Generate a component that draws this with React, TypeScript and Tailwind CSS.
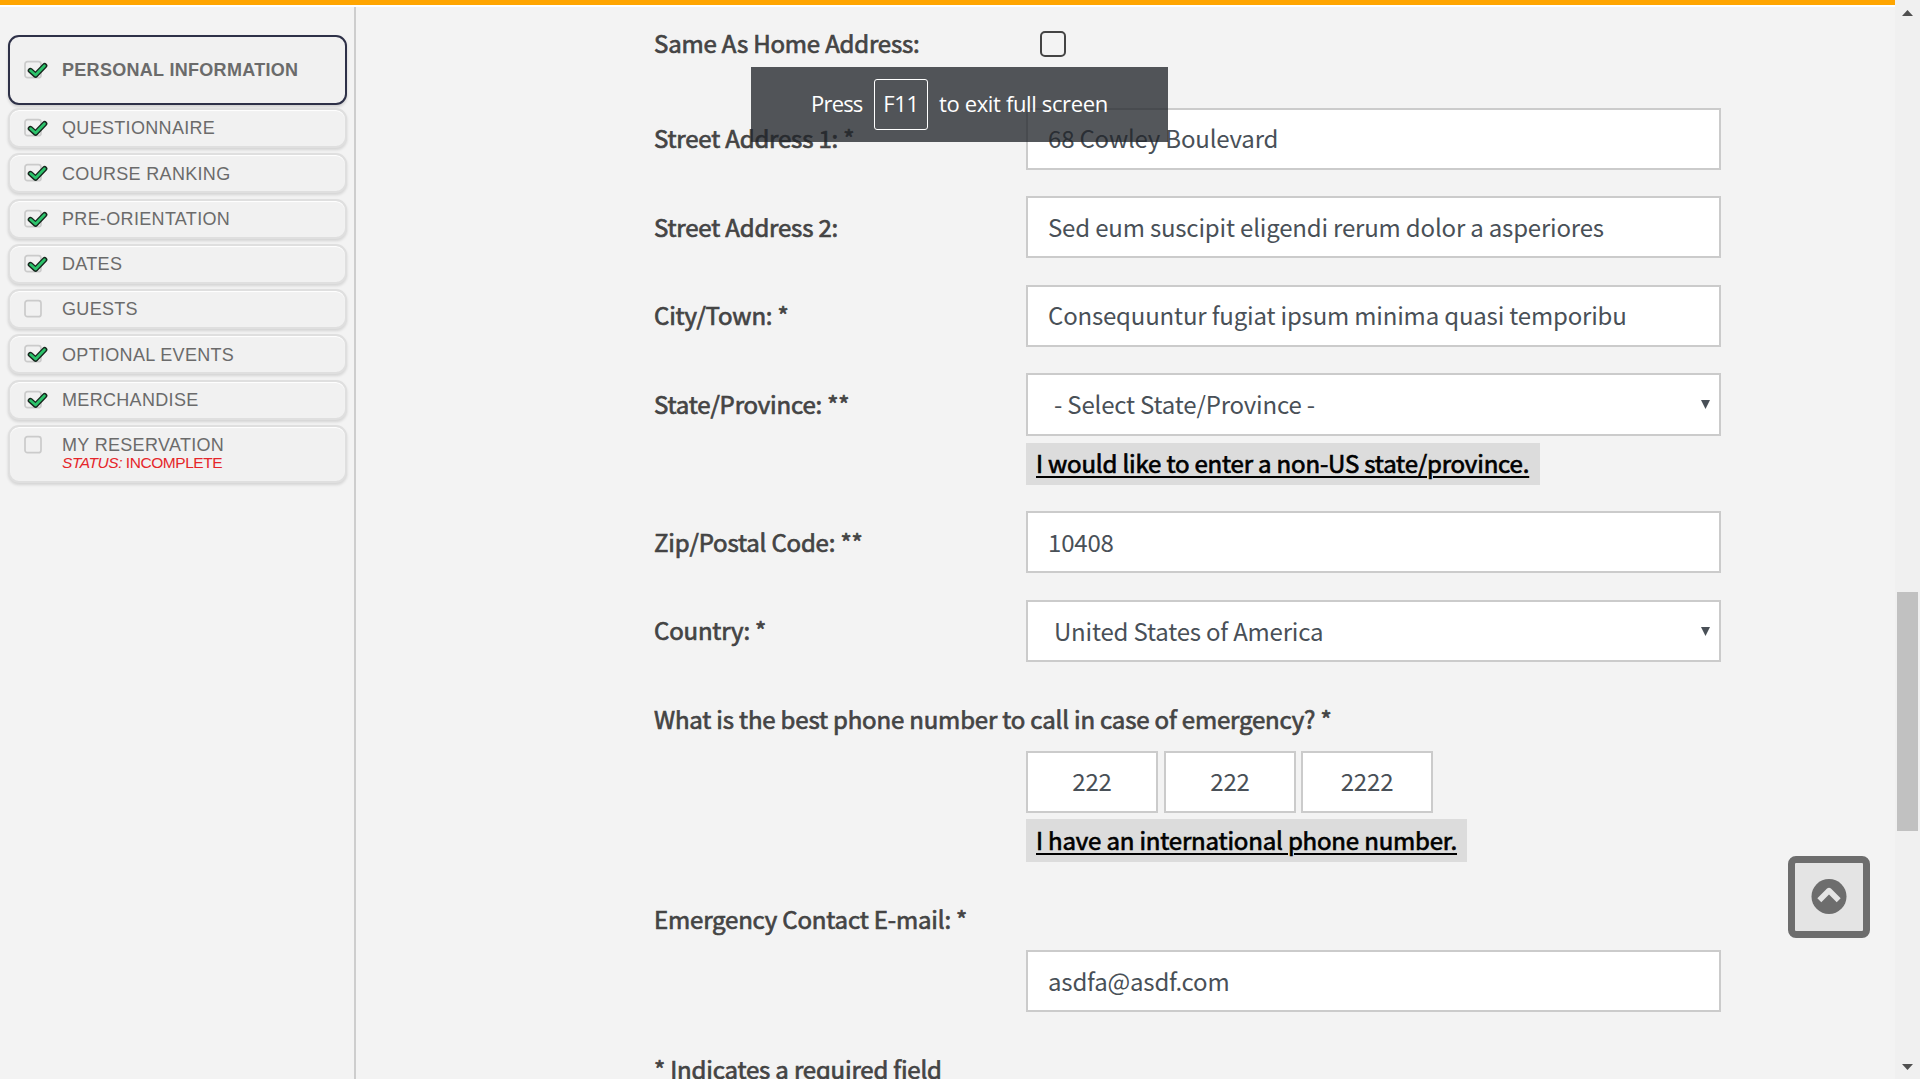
import type { ReactNode } from "react";

type Item = { label: string; done: boolean };

const items: Item[] = [
  { label: "QUESTIONNAIRE", done: true },
  { label: "COURSE RANKING", done: true },
  { label: "PRE-ORIENTATION", done: true },
  { label: "DATES", done: true },
  { label: "GUESTS", done: false },
  { label: "OPTIONAL EVENTS", done: true },
  { label: "MERCHANDISE", done: true },
];

function StatusBox({ done }: { done: boolean }) {
  return (
    <svg className="block h-[22px] w-[26px] shrink-0" viewBox="0 0 26 22" fill="none">
      <rect x="1" y="2.7" width="16" height="16" rx="2.5" stroke="#cbcbcb" strokeWidth="1.7" />
      {done && (
        <>
          <path d="M6.4 11.6L11.6 16.2L20.7 6.6" stroke="#16261d" strokeWidth="5.4" strokeLinecap="round" strokeLinejoin="round" />
          <path d="M6.5 11.6L11.6 16L20.5 6.8" stroke="#2cc36b" strokeWidth="2.7" strokeLinecap="round" strokeLinejoin="round" />
        </>
      )}
    </svg>
  );
}

function Label({ children, className = "leading-[38px]" }: { children: ReactNode; className?: string }) {
  return (
    <div className={`h-[40px] w-[372px] shrink-0 whitespace-nowrap text-[24px] tracking-[-0.175px] text-[#444] [-webkit-text-stroke:0.7px_#444] ${className}`}>
      {children}
    </div>
  );
}

function Field({ value, className = "" }: { value: string; className?: string }) {
  return (
    <input
      readOnly
      value={value}
      className={`block h-[62px] shrink-0 border-2 border-[#cbcbcb] bg-white text-[24px] tracking-[-0.18px] text-[#495057] outline-none ${className}`}
    />
  );
}

function SelectField({ value, className }: { value: string; className: string }) {
  return (
    <div className={`flex w-[695px] shrink-0 items-center justify-between border-2 border-[#cbcbcb] bg-white pr-[9px] pl-[26px] text-[24px] tracking-[-0.19px] text-[#495057] ${className}`}>
      <span className="h-[40px]">{value}</span>
      <svg className="h-[9px] w-[9px]" viewBox="0 0 9 9">
        <path d="M0 0H9L4.5 9Z" fill="#495057" />
      </svg>
    </div>
  );
}

function ToggleLink({ children, className }: { children: ReactNode; className: string }) {
  return (
    <div className={`ml-[372px] flex shrink-0 items-center bg-[#dcdcdc] pb-[2px] pl-[10px] whitespace-nowrap ${className}`}>
      <a className="text-[24px] leading-[40px] tracking-[-0.17px] text-black underline decoration-2 underline-offset-[3px] [-webkit-text-stroke:0.7px_#000]">
        {children}
      </a>
    </div>
  );
}

function Sidebar() {
  return (
    <aside className="h-full w-[356px] shrink-0 border-r-2 border-[#cdcdcd] pt-[28px] pl-[8px] font-['Liberation_Sans',Arial,sans-serif] text-[18px] text-[#6b6b6b]">
      <div className="flex h-[70px] w-[339px] items-center rounded-[11px] border-2 border-[#2e3148] bg-[#f1f1f1] pl-[14px] font-bold shadow-[0_2px_3px_rgba(0,0,0,0.15)]">
        <StatusBox done />
        <span className="ml-[12px] tracking-[0.3px]">PERSONAL INFORMATION</span>
      </div>
      <div className="mt-[3px] flex flex-col gap-[5.3px]">
        {items.map((item) => (
          <div
            key={item.label}
            className="flex h-[40px] w-[339px] items-center rounded-[11px] border-2 border-[#dfdfdf] bg-[#f1f1f1] pl-[14px] shadow-[0_2px_3px_rgba(0,0,0,0.13),inset_0_1px_1px_#fff]"
          >
            <StatusBox done={item.done} />
            <span className="ml-[12px] pt-[1.6px] tracking-[0.32px]">{item.label}</span>
          </div>
        ))}
        <div className="flex h-[58px] w-[339px] rounded-[11px] border-2 border-[#dfdfdf] bg-[#f1f1f1] pt-[7px] pl-[14px] shadow-[0_2px_3px_rgba(0,0,0,0.13),inset_0_1px_1px_#fff]">
          <StatusBox done={false} />
          <div className="ml-[12px]">
            <div className="leading-[22px] tracking-[0.32px]">MY RESERVATION</div>
            <div className="mt-[-2px] text-[15.5px] leading-[17px] tracking-[-0.45px] text-[#e5262b]">
              <i>STATUS:</i> INCOMPLETE
            </div>
          </div>
        </div>
      </div>
    </aside>
  );
}

function Form() {
  return (
    <main className="flex w-[1365px] flex-col pt-[24px] pl-[298px]">
      <div className="flex h-[26px] shrink-0 items-center">
        <Label>Same As Home Address:</Label>
        <div className="ml-[14px] h-[26px] w-[26px] rounded-[5px] border-2 border-[#444]" />
      </div>
      <div className="mt-[51px] flex shrink-0 items-center">
        <Label>Street Address 1: *</Label>
        <Field value="68 Cowley Boulevard" className="w-[695px] px-[20px] pb-[4px]" />
      </div>
      <div className="mt-[26px] flex shrink-0 items-center">
        <Label className="leading-[40px]">Street Address 2:</Label>
        <Field value="Sed eum suscipit eligendi rerum dolor a asperiores" className="w-[695px] px-[20px] pb-[2px]" />
      </div>
      <div className="mt-[27px] flex shrink-0 items-center">
        <Label>City/Town: *</Label>
        <Field value="Consequuntur fugiat ipsum minima quasi temporibu" className="w-[695px] px-[20px] pb-[4px]" />
      </div>
      <div className="mt-[26px] flex shrink-0 items-center">
        <Label>State/Province: **</Label>
        <SelectField value="- Select State/Province -" className="h-[63px] leading-[38px]" />
      </div>
      <ToggleLink className="mt-[7px] h-[42px] w-[514px]">I would like to enter a non-US state/province.</ToggleLink>
      <div className="mt-[26px] flex shrink-0 items-center">
        <Label className="leading-[40px]">Zip/Postal Code: **</Label>
        <Field value="10408" className="w-[695px] px-[20px] pb-[2px]" />
      </div>
      <div className="mt-[27px] flex shrink-0 items-center">
        <Label>Country: *</Label>
        <SelectField value="United States of America" className="h-[62px] leading-[40px]" />
      </div>
      <div className="mt-[39px] shrink-0">
        <Label className="leading-[36px]">What is the best phone number to call in case of emergency? *</Label>
      </div>
      <div className="mt-[10px] ml-[372px] flex shrink-0">
        <Field value="222" className="w-[132px] pb-[4px] text-center" />
        <Field value="222" className="ml-[6px] w-[132px] pb-[4px] text-center" />
        <Field value="2222" className="ml-[5px] w-[132px] pb-[4px] text-center" />
      </div>
      <ToggleLink className="mt-[6px] h-[43px] w-[441px]">I have an international phone number.</ToggleLink>
      <div className="mt-[38px] shrink-0">
        <Label>Emergency Contact E-mail: *</Label>
      </div>
      <div className="mt-[10px] ml-[372px] shrink-0">
        <Field value="asdfa@asdf.com" className="w-[695px] px-[20px] pb-[2px]" />
      </div>
      <div className="mt-[38px] shrink-0">
        <Label>* Indicates a required field</Label>
      </div>
    </main>
  );
}

function Scrollbar() {
  return (
    <div className="flex h-full w-[25px] shrink-0 flex-col items-center bg-[#f0f0f0] pt-[10px]">
      <svg className="h-[6px] w-[11px] shrink-0" viewBox="0 0 11 6">
        <path d="M0 6L5.5 0L11 6Z" fill="#505050" />
      </svg>
      <div className="mt-[576px] h-[239px] w-[21px] shrink-0 bg-[#c1c1c1]" />
      <svg className="mt-[233px] h-[6px] w-[11px] shrink-0" viewBox="0 0 11 6">
        <path d="M0 0L5.5 6L11 0Z" fill="#505050" />
      </svg>
    </div>
  );
}

export default function App() {
  return (
    <div className="relative flex h-[1079px] w-[1920px] overflow-hidden bg-[#f3f3f3] font-['Noto_Sans_CJK_SC',sans-serif]">
      <div className="flex h-full w-[1895px] shrink-0 flex-col overflow-hidden">
        <div className="h-[7px] shrink-0 border-b-2 border-white bg-[#ffa500]" />
        <div className="flex min-h-0 flex-1">
          <Sidebar />
          <Form />
        </div>
      </div>
      <Scrollbar />
      <div className="absolute top-[67px] left-[751px] flex h-[75px] w-[417px] items-center bg-[#20242a]/[0.77] pl-[60px] font-['Open_Sans',sans-serif] text-[22px] whitespace-nowrap text-white">
        <span className="w-[63px] pb-[2px] tracking-[-0.8px]">Press</span>
        <span className="flex h-[51px] w-[54px] items-center justify-center rounded-[3px] border-[1.5px] border-white pb-[2px] tracking-[-0.3px]">F11</span>
        <span className="ml-[11px] pb-[2px] tracking-[-0.36px]">to exit full screen</span>
      </div>
      <button className="absolute top-[856px] left-[1788px] flex h-[82px] w-[82px] items-center justify-center rounded-[8px] border-[7px] border-[#6d6d6d] bg-[#e4e4e4]">
        <svg className="h-[36px] w-[36px]" viewBox="0 0 36 36" fill="none">
          <circle cx="18" cy="17.5" r="17.5" fill="#6d6d6d" />
          <path d="M8.3 21.2L18 11.6L27.7 21.2" stroke="#e4e4e4" strokeWidth="5.6" strokeLinejoin="round" />
        </svg>
      </button>
    </div>
  );
}
